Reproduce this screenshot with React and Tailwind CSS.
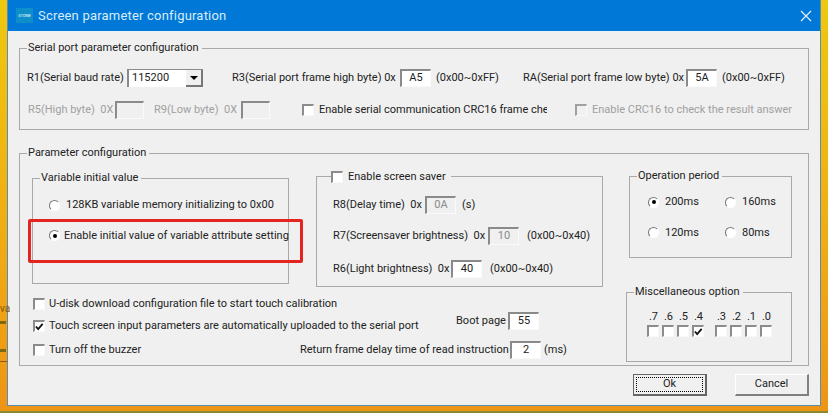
const Check = ({ on, dim }) => (
  <span className={`flex w-[12px] h-[12px] shrink-0 items-center justify-center border-t-2 border-l-2 border-r border-b ${dim ? "border-t-[#a0a0a0] border-l-[#a0a0a0] bg-[#f0f0f0]" : "border-t-[#8c8c8c] border-l-[#8c8c8c] bg-white"} border-r-[#f8f8f8] border-b-[#f8f8f8]`}>
    {on && (
      <svg width="10" height="9" viewBox="0 0 10 9">
        <path d="M1 4.5 L3.5 7.5 L8.5 1.5" fill="none" stroke="#111" strokeWidth="2" />
      </svg>
    )}
  </span>
);

const Radio = ({ on }) => (
  <span className="flex w-[11px] h-[11px] shrink-0 items-center justify-center rounded-full border border-t-[#777] border-l-[#777] border-r-white border-b-white bg-white">
    {on && <span className="w-[4px] h-[4px] rounded-full bg-black" />}
  </span>
);

const Field = ({ value, width = "w-[31px]", disabled }) => (
  <span className={`flex h-[18px] ${width} shrink-0 items-center justify-center border-t-2 border-l-2 border-r border-b border-t-[#8a8a8a] border-l-[#8a8a8a] border-r-[#fafafa] border-b-[#fafafa] ${disabled ? "bg-[#f0f0f0] text-[#8a8a8a]" : "bg-white text-[#222]"}`}>
    {value}
  </span>
);

const Group = ({ title, className, children }) => (
  <div className={`relative border border-[#a9a9a9] ${className}`}>
    <span className="absolute left-[7px] -top-[9px] bg-[#f0f0f0] px-[1px] leading-[16px] pr-[3px] whitespace-nowrap">{title}</span>
    {children}
  </div>
);

const RadioRow = ({ on, label, className }) => (
  <div className={`flex items-center ${className}`}>
    <Radio on={on} />
    <span className="ml-[6px] whitespace-nowrap">{label}</span>
  </div>
);

const bits = [".7", ".6", ".5", ".4", ".3", ".2", ".1", ".0"];

export default function App() {
  return (
    <div className="relative w-[828px] h-[413px] overflow-hidden bg-gradient-to-b from-[#eec80f] via-[#f0b012] to-[#ee9415] text-[11px] text-[#222] font-['Roboto','Liberation_Sans',sans-serif]">
      <div className="flex h-[406px] w-[814px] ml-[7px] flex-col bg-[#f0f0f0] border-b border-x border-[#5a8db0]">
        {/* title bar */}
        <div className="flex h-[31px] shrink-0 items-center bg-[#0078d7] pl-[8px] pr-[8px]">
          <span className="flex h-[15px] w-[17px] items-center justify-center bg-[#0f8fc9] text-[4px] text-white">STONE</span>
          <span className="ml-[5px] text-[13px] tracking-[0.2px] text-[#d8ecfa]">Screen parameter configuration</span>
          <svg className="ml-auto" width="12" height="12" viewBox="0 0 12 12">
            <path d="M1 1 L11 11 M11 1 L1 11" stroke="#e6f2fb" strokeWidth="1.2" />
          </svg>
        </div>

        <div className="flex flex-col pl-[11px]">
          {/* serial port */}
          <Group title="Serial port parameter configuration" className="mt-[17px] h-[82px] w-[790px]">
            <div className="flex h-[18px] mt-[20px] items-center pl-[7px]">
              <span className="w-[100px] whitespace-nowrap">R1(Serial baud rate)</span>
              <span className="flex h-[18px] w-[76px] items-center justify-between border-l-2 border-t border-[#8a8a8a] bg-white pl-[3px]">
                115200
                <span className="flex h-[17px] w-[17px] items-center justify-center border-r-2 border-b-2 border-[#777] bg-[#f0f0f0]">
                  <span className="border-x-[4px] border-t-[4px] border-x-transparent border-t-black" />
                </span>
              </span>
              <span className="ml-[29px] w-[168px] whitespace-nowrap">R3(Serial port frame high byte) 0x</span>
              <Field value="A5" />
              <span className="ml-[5px] w-[87px] whitespace-nowrap">(0x00~0xFF)</span>
              <span className="w-[163px] whitespace-nowrap">RA(Serial port frame low byte) 0x</span>
              <Field value="5A" />
              <span className="ml-[5px] whitespace-nowrap">(0x00~0xFF)</span>
            </div>
            <div className="flex h-[18px] mt-[14px] items-center pl-[8px] text-[#a0a0a0]">
              <span className="w-[87px] whitespace-nowrap">R5(High byte)&nbsp; 0X</span>
              <Field width="w-[29px]" disabled />
              <span className="ml-[10px] w-[87px] whitespace-nowrap">R9(Low byte)&nbsp; 0X</span>
              <Field width="w-[29px]" disabled />
              <span className="ml-[32px]"><Check /></span>
              <span className="ml-[5px] w-[228px] overflow-hidden whitespace-nowrap text-[#222]">Enable serial communication CRC16 frame check</span>
              <span className="ml-[28px]"><Check dim /></span>
              <span className="ml-[5px] whitespace-nowrap">Enable CRC16 to check the result answer</span>
            </div>
          </Group>

          {/* parameter configuration */}
          <Group title="Parameter configuration" className="mt-[23px] flex h-[213px] w-[790px] pl-[12px]">
            <div className="flex w-[594px] flex-col">
              <div className="flex items-start">
                <Group title="Variable initial value" className="mt-[24px] h-[106px] w-[257px]">
                  <RadioRow label="128KB variable memory initializing to 0x00" className="ml-[16px] mt-[18px]" />
                  <RadioRow on label="Enable initial value of variable attribute setting" className="ml-[16px] mt-[14px] [&>span:last-child]:ml-[4px]" />
                </Group>
                <div className="relative ml-[27px] mt-[22px] h-[111px] w-[287px] border border-[#a9a9a9]">
                  <div className="absolute left-[14px] -top-[8px] flex items-center bg-[#f0f0f0] pr-[5px]">
                    <Check />
                    <span className="ml-[5px] leading-[16px]">Enable screen saver</span>
                  </div>
                  <div className="flex h-[18px] mt-[19px] items-center pl-[16px]">
                    <span className="w-[92px] whitespace-nowrap">R8(Delay time)&nbsp; 0x</span>
                    <Field value="0A" disabled />
                    <span className="ml-[6px]">(s)</span>
                  </div>
                  <div className="flex h-[18px] mt-[13px] items-center pl-[16px]">
                    <span className="w-[155px] whitespace-nowrap">R7(Screensaver brightness)&nbsp; 0x</span>
                    <Field value="10" disabled />
                    <span className="ml-[8px] whitespace-nowrap">(0x00~0x40)</span>
                  </div>
                  <div className="flex h-[18px] mt-[15px] items-center pl-[16px]">
                    <span className="w-[118px] whitespace-nowrap">R6(Light brightness)&nbsp; 0x</span>
                    <Field value="40" />
                    <span className="ml-[8px] whitespace-nowrap">(0x00~0x40)</span>
                  </div>
                </div>
              </div>

              <div className="mt-[6px] flex h-[22px] items-center pl-[1px]">
                <Check />
                <span className="ml-[4px] whitespace-nowrap">U-disk download configuration file to start touch calibration</span>
              </div>
              <div className="flex h-[22px] items-center pl-[1px]">
                <Check on />
                <span className="ml-[4px] w-[407px] whitespace-nowrap">Touch screen input parameters are automatically uploaded to the serial port</span>
                <span className="-mt-[10px] w-[52px] whitespace-nowrap">Boot page</span>
                <span className="-mt-[10px]"><Field value="55" /></span>
              </div>
              <div className="flex h-[26px] items-center pl-[1px]">
                <Check />
                <span className="ml-[4px] w-[251px] whitespace-nowrap">Turn off the buzzer</span>
                <span className="w-[210px] whitespace-nowrap">Return frame delay time of read instruction</span>
                <Field value="2" />
                <span className="ml-[3px]">(ms)</span>
              </div>
            </div>

            <div className="flex flex-col items-end">
              <Group title="Operation period" className="mt-[22px] h-[82px] w-[163px]">
                <div className="mt-[17px] flex">
                  <RadioRow on label="200ms" className="ml-[18px] w-[77px]" />
                  <RadioRow label="160ms" />
                </div>
                <div className="mt-[14px] flex">
                  <RadioRow label="120ms" className="ml-[18px] w-[77px]" />
                  <RadioRow label="80ms" />
                </div>
              </Group>
              <Group title="Miscellaneous option" className="mt-[34px] h-[70px] w-[166px]">
                <div className="mt-[17px] flex pl-[19px] leading-[14px]">
                  {bits.map((b, i) => (
                    <span key={b} className={`w-[15px] text-center ${i === 4 ? "ml-[8px]" : ""}`}>{b}</span>
                  ))}
                </div>
                <div className="mt-[1px] flex pl-[20px]">
                  {bits.map((b, i) => (
                    <span key={b} className={`w-[15px] ${i === 4 ? "ml-[8px]" : ""}`}><Check on={b === ".4"} /></span>
                  ))}
                </div>
              </Group>
            </div>
          </Group>

          {/* buttons */}
          <div className="mt-[8px] flex w-[790px] justify-end gap-[28px]">
            <button className="flex h-[22px] w-[74px] items-center justify-center border border-[#666] border-b-2 border-r-2 bg-[#f0f0f0] p-[2px]">
              <span className="flex h-full w-full items-center justify-center border border-dotted border-black">Ok</span>
            </button>
            <button className="flex h-[22px] w-[74px] items-center justify-center border-t border-l border-t-white border-l-white border-r-2 border-b-2 border-r-[#808080] border-b-[#808080] bg-[#f0f0f0]">Cancel</button>
          </div>
        </div>
      </div>

      {/* red annotation */}
      <div className="absolute left-[28px] top-[219px] h-[44px] w-[275px] rounded-[2px] border-[3px] border-[#e3241f]" />

      {/* window behind */}
      <span className="absolute left-0 top-[303px] text-[10px] leading-[12px] text-[#7a5a10]">va</span>
      <div className="absolute left-0 top-[321px] h-[3px] w-[6px] bg-[#7d6a10]" />
      <div className="absolute left-0 top-[349px] h-[3px] w-[6px] bg-[#7d6a10]" />
      <div className="absolute left-0 top-[361px] h-px w-[7px] bg-[#8a5a10]" />
      <div className="absolute bottom-0 left-0 h-[2px] w-full bg-[#8a8a30]" />
    </div>
  );
}
